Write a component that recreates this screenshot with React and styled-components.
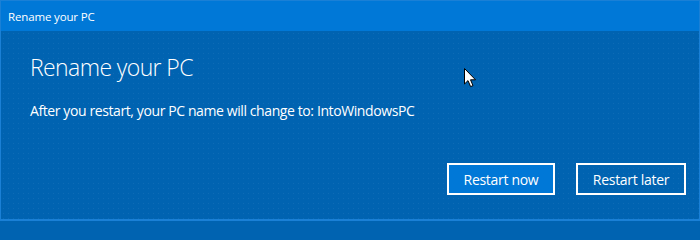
import styled, { createGlobalStyle } from "styled-components";

const GlobalStyle = createGlobalStyle`
  html, body {
    margin: 0;
    padding: 0;
    background: #0063b1;
  }
  * {
    box-sizing: border-box;
  }
`;

const Window = styled.div`
  width: 700px;
  height: 221px;
  display: flex;
  flex-direction: column;
  border: 1px solid #1a80d6;
  border-bottom-width: 2px;
  font-family: "Open Sans", "Noto Sans", sans-serif;
  color: #ffffff;
  overflow: hidden;
`;

const TitleBar = styled.div`
  height: 30px;
  background: #0078d7;
  display: flex;
  align-items: center;
  padding-left: 7px;
  font-size: 11.5px;
  letter-spacing: -0.15px;
  flex-shrink: 0;
`;

const Body = styled.div`
  flex: 1;
  position: relative;
  background-color: #0063b1;
  background-image: radial-gradient(rgba(255, 255, 255, 0.06) 0.6px, transparent 0.8px);
  background-size: 5px 5px;
  padding: 20px 13px 0 29px;
  display: flex;
  flex-direction: column;
`;

const Heading = styled.h1`
  margin: 0;
  font-weight: 300;
  font-size: 23px;
  line-height: 32px;
  letter-spacing: -0.6px;
`;

const Message = styled.p`
  margin: 18px 0 0;
  font-size: 14px;
  line-height: 20px;
  letter-spacing: -0.4px;
`;

const Actions = styled.div`
  margin-top: auto;
  margin-bottom: 24px;
  display: flex;
  justify-content: flex-end;
  gap: 21px;
`;

const Button = styled.button`
  width: ${(props) => props.width}px;
  height: 32px;
  border: 2px solid #ffffff;
  background: ${(props) => (props.primary ? "#0078d7" : "transparent")};
  color: #ffffff;
  font-family: inherit;
  font-size: 14px;
  letter-spacing: -0.3px;
  padding: 0;
  cursor: pointer;
`;

const Cursor = styled.svg`
  position: absolute;
  left: 463px;
  top: 37px;
`;

const App = () => {
  return (
    <>
      <GlobalStyle />
      <Window>
        <TitleBar>Rename your PC</TitleBar>
        <Body>
          <Heading>Rename your PC</Heading>
          <Message>After you restart, your PC name will change to: IntoWindowsPC</Message>
          <Actions>
            <Button primary width={108}>Restart now</Button>
            <Button width={110}>Restart later</Button>
          </Actions>
          <Cursor width="13" height="20" viewBox="0 0 13 20">
            <path
              d="M0.5 0.5 L0.5 16 L4 12.6 L6.6 18.6 L9 17.6 L6.5 11.8 L11.5 11.8 Z"
              fill="#ffffff"
              stroke="#000000"
              strokeWidth="1"
              strokeLinejoin="miter"
            />
          </Cursor>
        </Body>
      </Window>
    </>
  );
};

export default App;
